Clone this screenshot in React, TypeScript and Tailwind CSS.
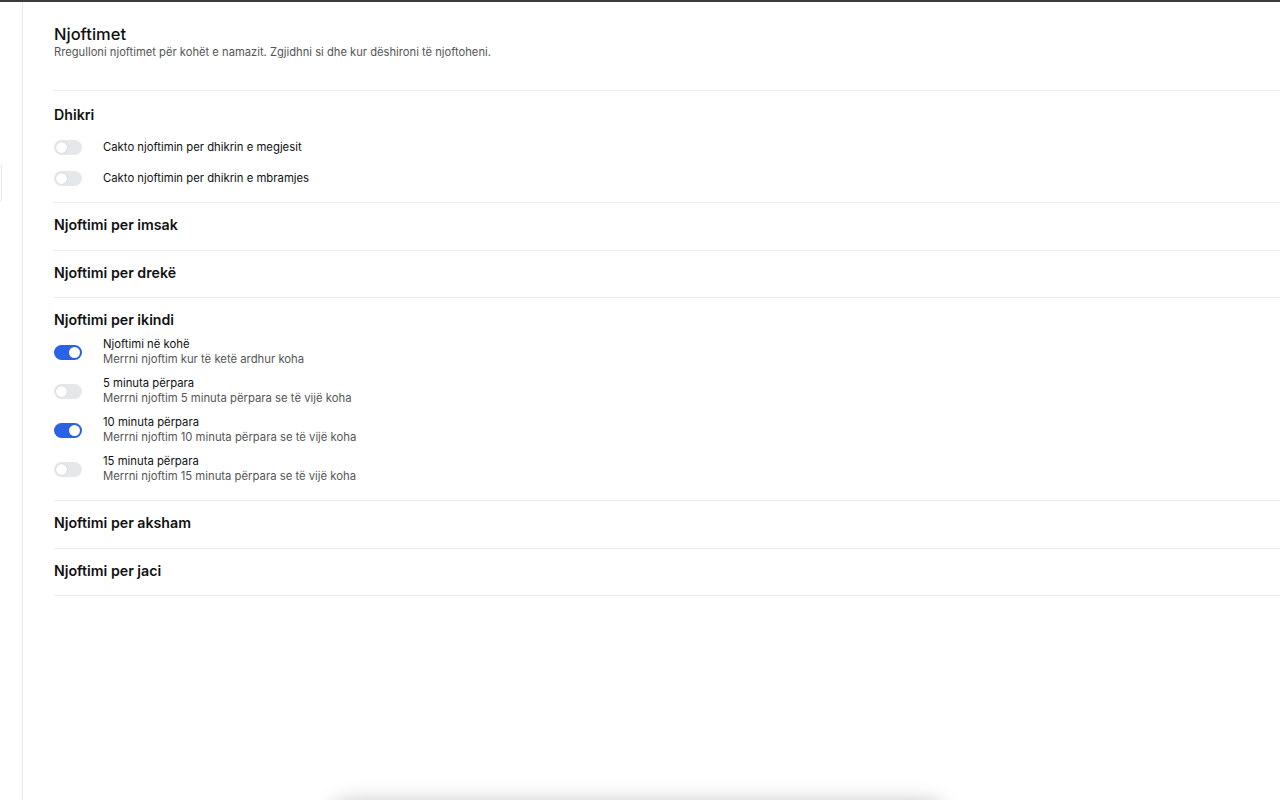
import React from "react";

const font = { fontFamily: "Inter, 'Noto Sans', sans-serif" };

function Toggle({ on }: { on: boolean }) {
  return (
    <div
      className={`relative h-[15px] w-[28px] shrink-0 rounded-full ${
        on ? "bg-[#2c62e6]" : "bg-[#e6e7ea]"
      }`}
    >
      <div
        className={`absolute top-[2px] h-[11px] w-[11px] rounded-full bg-white shadow-[0_0_1px_rgba(0,0,0,0.25)] ${
          on ? "left-[15px]" : "left-[2px]"
        }`}
      />
    </div>
  );
}

function Section({
  title,
  tight,
  children,
}: {
  title: string;
  tight?: boolean;
  children?: React.ReactNode;
}) {
  const pb = children ? "pb-[16px]" : tight ? "pb-[17px]" : "pb-[18px]";
  return (
    <div className={`border-b border-[#ececec] pt-[14px] ${pb}`}>
      <h3 className="text-[14.2px] font-semibold leading-[15px] text-[#111]">{title}</h3>
      {children}
    </div>
  );
}

const ikindi = [
  { t: "Njoftimi në kohë", s: "Merrni njoftim kur të ketë ardhur koha", on: true },
  { t: "5 minuta përpara", s: "Merrni njoftim 5 minuta përpara se të vijë koha", on: false },
  { t: "10 minuta përpara", s: "Merrni njoftim 10 minuta përpara se të vijë koha", on: true },
  { t: "15 minuta përpara", s: "Merrni njoftim 15 minuta përpara se të vijë koha", on: false },
];

export default function App() {
  return (
    <div className="relative h-[800px] w-[1280px] overflow-hidden bg-white" style={font}>
      <div className="h-[2px] w-full bg-[#3b3b3b]" />
      <div className="flex h-[798px]">
        {/* collapsed sidebar */}
        <aside className="w-[23px] shrink-0 border-r border-[#ebebeb]">
          <div className="mt-[163px] h-[36px] w-[2px] rounded-r-[4px] border border-l-0 border-[#e6e6e6]" />
        </aside>
        <main className="flex-1 pl-[31px]">
          <div className="border-b border-[#ececec] pt-[23px] pb-[31px]">
            <h1 className="text-[16.5px] font-medium leading-[18px] text-[#111]">Njoftimet</h1>
            <p className="mt-[2px] text-[11.2px] leading-[14px] text-[#555]">
              Rregulloni njoftimet për kohët e namazit. Zgjidhni si dhe kur dëshironi të njoftoheni.
            </p>
          </div>

          <div className="border-b border-[#ececec] pt-[16px] pb-[16px]">
            <h3 className="text-[14.2px] font-semibold leading-[15px] text-[#111]">Dhikri</h3>
            <div className="mt-[18px] flex flex-col gap-[16px]">
              {["Cakto njoftimin per dhikrin e megjesit", "Cakto njoftimin per dhikrin e mbramjes"].map(
                (l) => (
                  <div key={l} className="flex items-center gap-[21px]">
                    <Toggle on={false} />
                    <span className="text-[11.3px] leading-[15px] text-[#111]">{l}</span>
                  </div>
                )
              )}
            </div>
          </div>
          <Section title="Njoftimi per imsak" />
          <Section title="Njoftimi per drekë" tight />
          <Section title="Njoftimi per ikindi">
            <div className="mt-[10px] flex flex-col gap-[9px]">
              {ikindi.map((r) => (
                <div key={r.t} className="flex items-center gap-[21px]">
                  <Toggle on={r.on} />
                  <div className="flex flex-col">
                    <span className="text-[11.3px] leading-[15px] text-[#111]">{r.t}</span>
                    <span className="text-[11.3px] leading-[15px] text-[#555]">{r.s}</span>
                  </div>
                </div>
              ))}
            </div>
          </Section>
          <Section title="Njoftimi per aksham" />
          <Section title="Njoftimi per jaci" tight />
        </main>
      </div>
      {/* floating bar just below the fold */}
      <div className="fixed left-[334px] top-[804px] h-[60px] w-[608px] rounded-[12px] bg-white shadow-[0_0_22px_rgba(0,0,0,0.3)]" />
    </div>
  );
}
